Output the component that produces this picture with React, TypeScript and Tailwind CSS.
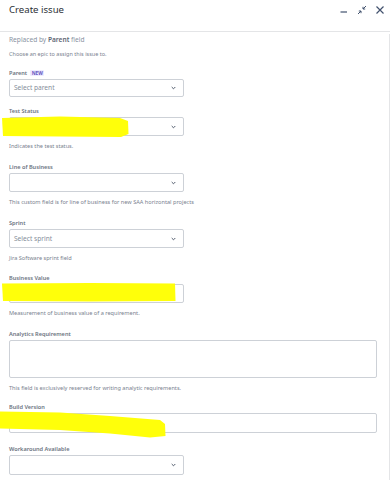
import React from "react";

type FieldProps = {
  label: string;
  badge?: string;
  placeholder?: string;
  helper?: string;
  kind: "select" | "input" | "textarea";
  wide?: boolean;
  boxH?: string;
  mt?: string;
};

function Chevron() {
  return (
    <svg width="5" height="4" viewBox="0 0 5 4" className="mr-[7px]">
      <path d="M0.7 1 L2.5 2.8 L4.3 1" fill="none" stroke="#505a6b" strokeWidth="1" />
    </svg>
  );
}

function Field({ label, badge, placeholder, helper, kind, wide, boxH = "h-[19px]", mt = "mt-[9px]" }: FieldProps) {
  return (
    <div className={mt}>
      <div className="flex items-center h-[12px] text-[5.6px] font-semibold text-[#6b7380]">
        <span>{label}</span>
        {badge && (
          <span className="ml-[3px] px-[1.5px] rounded-[1px] bg-[#eeebff] text-[#6554c0] text-[4.8px] font-bold leading-[6px]">
            {badge}
          </span>
        )}
      </div>
      <div
        className={`${wide ? "w-[368px]" : "w-[175px]"} ${boxH} border border-[#cdd1d7] rounded-[2px] bg-white flex items-center justify-between`}
      >
        <span className="pl-[4px] text-[6.6px] text-[#858d9a]">{placeholder}</span>
        {kind === "select" && <Chevron />}
      </div>
      {helper && (
        <div className="mt-[4px] h-[12px] flex items-center text-[5.6px] text-[#7a828f]">{helper}</div>
      )}
    </div>
  );
}

export default function App() {
  return (
    <div
      className="relative w-[390px] h-[480px] bg-white overflow-hidden"
      style={{ fontFamily: '"Noto Sans", "Open Sans", sans-serif' }}
    >
      {/* Header */}
      <div className="h-[32px] border-b border-[#e4e5e7] flex items-start justify-between pl-[9px] pr-[5px]">
        <h1 className="mt-[2px] text-[9.6px] leading-[16px] text-[#2b2f36]">Create issue</h1>
        <div className="flex items-center gap-[8px] mt-[5px]">
          <svg width="10" height="10" viewBox="0 0 10 10">
            <path d="M1.5 7 H8" stroke="#42526e" strokeWidth="1.2" />
          </svg>
          <svg width="10" height="10" viewBox="0 0 10 10">
            <path d="M9 1 L6 4 M6 1.8 V4 H8.2" fill="none" stroke="#42526e" strokeWidth="1" />
            <path d="M1 9 L4 6 M1.8 6 H4 V8.2" fill="none" stroke="#42526e" strokeWidth="1" />
          </svg>
          <svg width="10" height="10" viewBox="0 0 10 10">
            <path d="M1.5 1.5 L8.5 8.5 M8.5 1.5 L1.5 8.5" stroke="#42526e" strokeWidth="1.2" />
          </svg>
        </div>
      </div>

      {/* Body */}
      <div className="h-[448px] border-r border-[#e4e5e7] pl-[9px]">
        <div className="mt-[2px] h-[12px] flex items-center text-[6.6px] text-[#8a93a2]">
          Replaced by&nbsp;<span className="font-semibold text-[#5e6673]">Parent</span>&nbsp;field
        </div>
        <div className="mt-[2px] h-[12px] flex items-center text-[5.5px] text-[#7a828f]">
          Choose an epic to assign this issue to.
        </div>
        <Field label="Parent" badge="NEW" placeholder="Select parent" kind="select" boxH="h-[18px]" mt="mt-[7px]" />
        <Field label="Test Status" kind="select" helper="Indicates the test status." mt="mt-[8px]" />
        <Field label="Line of Business" kind="select" helper="This custom field is for line of business for new SAA horizontal projects" />
        <Field label="Sprint" placeholder="Select sprint" kind="select" helper="Jira Software sprint field" />
        <Field label="Business Value" kind="input" helper="Measurement of business value of a requirement." mt="mt-[8px]" />
        <Field label="Analytics Requirement" kind="textarea" wide boxH="h-[38px]" helper="This field is exclusively reserved for writing analytic requirements." />
        <Field label="Build Version" kind="input" wide boxH="h-[20px]" mt="mt-[7px]" />
        <Field label="Workaround Available" kind="select" boxH="h-[20px]" mt="mt-[10px]" />
      </div>

      {/* Marker highlights drawn over the form */}
      <svg className="absolute inset-0 pointer-events-none" width="390" height="480" viewBox="0 0 390 480">
        <path d="M2 118 L60 116.5 L120 118 L128 121 L128.5 134 L121 137 L60 136.5 L3 136 Z" fill="#ffff0a" />
        <path d="M2 283.5 L90 283 L175 283.5 L175.5 301 L90 301.5 L3 301 Z" fill="#ffff0a" />
        <path d="M0 411.5 L60 412.5 L110 416 L160 420 L165 424 L165.5 436 L150 437.5 L110 433.5 L60 430 L0 428.5 Z" fill="#ffff0a" />
      </svg>
    </div>
  );
}
